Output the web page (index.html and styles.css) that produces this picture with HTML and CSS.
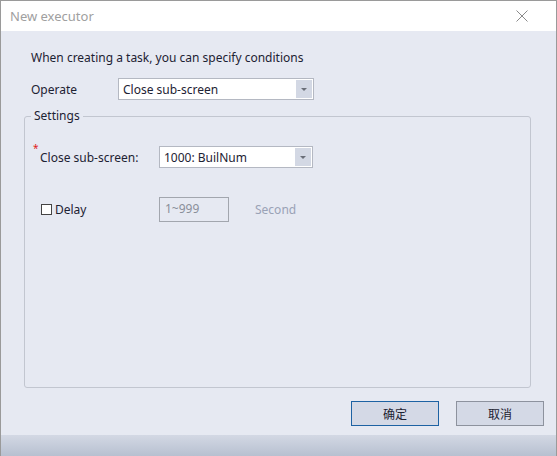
FILE: index.html
```html
<!DOCTYPE html>
<html>
<head>
<meta charset="utf-8">
<link rel="stylesheet" href="styles.css">
</head>
<body>
<div class="window">
  <div class="titlebar">
    <span class="title">New executor</span>
    <svg class="close" width="12" height="12" viewBox="0 0 12 12"><path d="M0.5 0.5 L11.5 11.5 M11.5 0.5 L0.5 11.5" stroke="#8a8a8a" stroke-width="1" fill="none"/></svg>
  </div>
  <div class="content">
    <div class="hint">When creating a task, you can specify conditions</div>
    <div class="row op-row">
      <span class="label op-label">Operate</span>
      <div class="select sel-op"><span class="sel-text">Close sub-screen</span><span class="arrow"><i></i></span></div>
    </div>
    <fieldset class="settings">
      <legend>Settings</legend>
      <div class="row sub-row">
        <span class="label sub-label"><span class="req">*</span>Close sub-screen:</span>
        <div class="select sel-sub"><span class="sel-text">1000: BuilNum</span><span class="arrow"><i></i></span></div>
      </div>
      <div class="row delay-row">
        <label class="check"><span class="box"></span>Delay</label>
        <div class="num">1~999</div>
        <span class="unit">Second</span>
      </div>
    </fieldset>
    <div class="buttons">
      <button class="btn primary">确定</button>
      <button class="btn">取消</button>
    </div>
  </div>
  <div class="footer"></div>
</div>
</body>
</html>
```
FILE: styles.css
```css
html, body { margin: 0; padding: 0; }
body {
  width: 557px; height: 456px; overflow: hidden;
  font-family: "Noto Sans", "Noto Sans CJK SC", sans-serif;
  font-size: 12px; color: #1d2233;
}
.window {
  width: 557px; height: 456px; box-sizing: border-box;
  border: 1px solid #9a9a9a; border-bottom: none;
  background: #e6e9f2;
  display: flex; flex-direction: column;
}
.titlebar {
  height: 30px; background: #fff; flex: none;
  display: flex; align-items: center; justify-content: space-between;
  padding: 0 28px 0 9px;
}
.title { color: #a0a0a0; font-size: 13px; }
.close { display: block; }
.content {
  flex: 1; display: flex; flex-direction: column;
}
.hint { margin: 19px 0 0 30px; line-height: 16px; }
.row { display: flex; align-items: center; }
.op-row { margin: 12px 0 0 30px; }
.op-label { width: 87px; }
.select {
  box-sizing: border-box; height: 22px; background: #fff;
  border: 1px solid #b4b8c2; display: flex; align-items: center;
  padding: 1px;
}
.sel-op { width: 196px; }
.sel-sub { width: 154px; }
.sel-text { flex: 1; padding-left: 3px; }
.arrow {
  width: 16px; height: 18px; background: #d3d8e4;
  display: flex; align-items: center; justify-content: center;
}
.arrow i {
  width: 0; height: 0; border-left: 3px solid transparent; border-right: 3px solid transparent;
  border-top: 3px solid #6a6e78;
}
.settings {
  margin: 8px 25px 0 23px; padding: 0; height: 280px; box-sizing: border-box;
  border: 1px solid #c2c6d0; border-radius: 3px;
}
.settings legend { margin-left: 6px; padding: 0 3px; line-height: 16px; }
.sub-row { margin: 22px 0 0 15px; }
.sub-label { width: 119px; position: relative; }
.req { position: absolute; left: -7px; top: -8px; color: #e02020; font-size: 10px; }
.delay-row { margin: 29px 0 0 16px; }
.check { display: flex; align-items: center; width: 118px; }
.box {
  width: 9px; height: 9px; border: 1px solid #444; background: #fff; margin-right: 3px;
}
.num {
  box-sizing: border-box; width: 70px; height: 25px;
  border: 1px solid #a2a6ae; color: #8a8f9a; padding: 3px 0 0 5px;
  line-height: 16px;
}
.unit { color: #9aa2b6; margin-left: 26px; }
.buttons {
  display: flex; justify-content: flex-end; gap: 17px;
  margin: 13px 12px 0 0;
}
.btn {
  box-sizing: border-box; width: 88px; height: 25px;
  background: #d4d9e6; border: 1px solid #8d929e;
  font-family: "Noto Sans CJK SC", sans-serif; font-size: 12px; color: #1d2233;
  padding: 0;
}
.btn.primary { border-color: #1d62a3; }
.footer {
  height: 21px; flex: none;
  background: linear-gradient(#d3d8e4, #b7c0d0);
}
```
